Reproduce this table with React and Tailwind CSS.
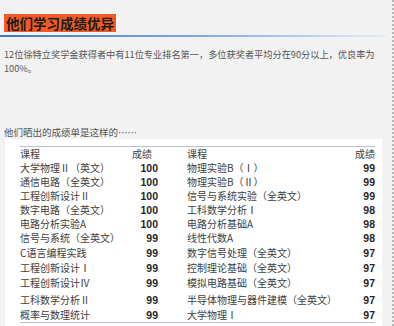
const rows = [
  { a: "大学物理Ⅱ（英文）", s: "100", b: "物理实验B（Ⅰ）", t: "99", h: "h-[14px]" },
  { a: "通信电路（全英文）", s: "100", b: "物理实验B（Ⅱ）", t: "99", h: "h-[14px]" },
  { a: "工程创新设计Ⅱ", s: "100", b: "信号与系统实验（全英文）", t: "99", h: "h-[14px]" },
  { a: "数字电路（全英文）", s: "100", b: "工科数学分析Ⅰ", t: "98", h: "h-[14px]" },
  { a: "电路分析实验A", s: "100", b: "电路分析基础A", t: "98", h: "h-[14px]" },
  { a: "信号与系统（全英文）", s: "99", b: "线性代数A", t: "98", h: "h-[14px]" },
  { a: "C语言编程实践", s: "99", b: "数字信号处理（全英文）", t: "97", h: "h-[15px]" },
  { a: "工程创新设计Ⅰ", s: "99", b: "控制理论基础（全英文）", t: "97", h: "h-[15px]" },
  { a: "工程创新设计Ⅳ", s: "99", b: "模拟电路基础（全英文）", t: "97", h: "h-[16px]" },
  { a: "工科数学分析Ⅱ", s: "99", b: "半导体物理与器件建模（全英文）", t: "97", h: "h-[17px]" },
  { a: "概率与数理统计", s: "99", b: "大学物理Ⅰ", t: "97", h: "h-[14px]" },
];

function Row({ a, s, b, t, h, head }) {
  const num = "font-bold text-[10.5px] text-[#262626] font-['Liberation_Sans',sans-serif]";
  return (
    <div className={`flex items-center ${h}`}>
      <div className="w-[112px] whitespace-nowrap">{a}</div>
      <div className={`w-[26px] ${head ? "text-left" : `text-right ${num}`}`}>{s}</div>
      <div className="w-[29px]" />
      <div className="w-[150px] whitespace-nowrap">{b}</div>
      <div className={`w-[38px] text-right ${head ? "" : num}`}>{t}</div>
    </div>
  );
}

export default function App() {
  return (
    <div className="w-[394px] h-[326px] bg-[#f2f2f2] overflow-hidden flex font-['Noto_Sans_CJK_SC','Noto_Sans',sans-serif]">
      <div className="w-[391px] pt-[10px]">
        {/* title */}
        <div className="pl-[4px]">
          <span className="inline-block h-[18px] px-[2px] bg-[#f15a22] text-[#1c1c1c] text-[13.5px] font-bold leading-[18px]">
            他们学习成绩优异
          </span>
        </div>
        <div className="mt-[1px] h-[2px] w-[386px] bg-gradient-to-r from-[#3f78c8] via-[#7ea6dc] to-[#e4ecf6]" />

        <p className="mt-[10px] px-[4px] w-[391px] text-[9.2px] leading-[14px] text-[#555]">
          12位徐特立奖学金获得者中有11位专业排名第一，多位获奖者平均分在90分以上，优良率为100%。
        </p>

        <p className="mt-[50px] px-[4px] text-[9.5px] leading-[14px] text-[#555]">
          他们晒出的成绩单是这样的……
        </p>

        {/* score sheet */}
        <div className="ml-[5px] w-[377px] h-[189px] bg-white pt-[7px] pl-[15px]">
          <div className="w-[355px] border-t border-b border-[#b9c3cf] text-[10px] leading-[12px] text-[#404040]">
            <Row a="课程" s="成绩" b="课程" t="成绩" h="h-[14px]" head />
            {rows.map((r, i) => (
              <Row key={i} {...r} />
            ))}
          </div>
        </div>
      </div>
      <div className="w-[3px] h-full border-r-2 border-dotted border-[#b5b5b5]" />
    </div>
  );
}
